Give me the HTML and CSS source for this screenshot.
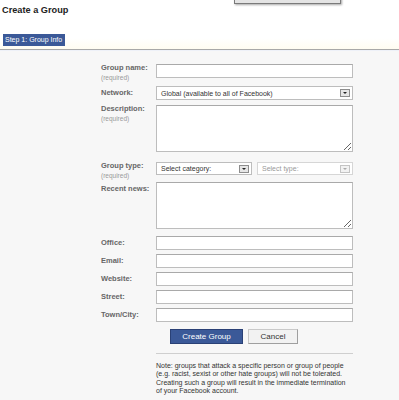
FILE: index.html
```html
<!DOCTYPE html>
<html lang="en">
  <head>
    <meta charset="UTF-8" />
    <title>Create a Group</title>
    <link rel="stylesheet" href="styles.css">
  </head>

  <body>
    <div class="popup-edge"></div>

    <header class="head">
      <h1>Create a Group</h1>
      <div class="tabs">
        <span class="tab">Step 1: Group Info</span>
      </div>
    </header>

    <main class="panel">
      <form class="group-form">
        <div class="row row-req row-name">
          <label class="lbl req-lbl">Group name:<span class="req">(required)</span></label>
          <input class="field" type="text" />
        </div>

        <div class="row row-net">
          <label class="lbl">Network:</label>
          <div class="select">
            <span>Global (available to all of Facebook)</span>
            <span class="arrow"></span>
          </div>
        </div>

        <div class="row row-desc">
          <label class="lbl req-lbl">Description:<span class="req">(required)</span></label>
          <textarea class="area"></textarea>
        </div>

        <div class="row row-type">
          <label class="lbl req-lbl">Group type:<span class="req">(required)</span></label>
          <div class="pair">
            <div class="select">
              <span>Select category:</span>
              <span class="arrow"></span>
            </div>
            <div class="select off">
              <span>Select type:</span>
              <span class="arrow"></span>
            </div>
          </div>
        </div>

        <div class="row row-news">
          <label class="lbl">Recent news:</label>
          <textarea class="area"></textarea>
        </div>

        <div class="row">
          <label class="lbl">Office:</label>
          <input class="field" type="text" />
        </div>
        <div class="row">
          <label class="lbl">Email:</label>
          <input class="field" type="text" />
        </div>
        <div class="row">
          <label class="lbl">Website:</label>
          <input class="field" type="text" />
        </div>
        <div class="row">
          <label class="lbl">Street:</label>
          <input class="field" type="text" />
        </div>
        <div class="row">
          <label class="lbl">Town/City:</label>
          <input class="field" type="text" />
        </div>

        <div class="buttons">
          <button type="button" class="btn btn-main">Create Group</button>
          <button type="button" class="btn btn-cancel">Cancel</button>
        </div>

        <p class="note">
          Note: groups that attack a specific person or group of people<br />
          (e.g. racist, sexist or other hate groups) will not be tolerated.<br />
          Creating such a group will result in the immediate termination<br />
          of your Facebook account.
        </p>
      </form>
    </main>
  </body>
</html>
```

FILE: styles.css
```css
* {
  margin: 0;
  padding: 0;
  box-sizing: border-box;
}

body {
  position: relative;
  height: 400px;
  overflow: hidden;
  font-family: "Liberation Sans", Arial, sans-serif;
  background-color: #f7f7f7;
  color: #333;
}

/* bottom of a menu hanging in from above */
.popup-edge {
  position: absolute;
  top: -20px;
  left: 234px;
  width: 107px;
  height: 24px;
  background: #e4e4e4;
  border: 1px solid #7a7a7a;
  box-shadow: 1px 1px 2px rgba(0, 0, 0, 0.35);
}

.head {
  height: 50px;
  background: linear-gradient(to bottom, #fff 0%, #fff 78%, #fffcf1 100%);
  border-bottom: 1px solid #a8a8a8;
  padding: 5px 0 0 2px;
}

.head h1 {
  font-size: 9.2px;
  line-height: 11px;
  font-weight: bold;
  color: #222;
}

.tabs {
  margin-top: 12px;
  padding-left: 1px;
}

.tab {
  display: inline-block;
  height: 12px;
  padding: 0 3px 0 2px;
  background-color: #3b5998;
  color: #fff;
  font-size: 7px;
  line-height: 12px;
}

.panel {
  border-top: 1px solid #eef1f8;
  padding-top: 13px;
}

.group-form {
  width: 252px;
  margin-left: 101px;
}

.row {
  display: grid;
  grid-template-columns: 55px 197px;
  align-items: start;
  margin-bottom: 4px;
}

.lbl {
  display: flex;
  flex-direction: column;
  padding-top: 2px;
  font-size: 7.5px;
  line-height: 9px;
  font-weight: bold;
  color: #666;
}

.req-lbl {
  padding-top: 0;
  margin-top: -1px;
  line-height: 10px;
}

.req {
  font-size: 6.5px;
  font-weight: normal;
  color: #999;
}

.row-name {
  margin-bottom: 3px;
}

.row-net {
  margin-bottom: 5px;
}

.row-desc {
  margin-bottom: 10px;
}

.row-type {
  margin-bottom: 1px;
}

.row-news {
  margin-bottom: 7px;
}

.field {
  display: block;
  width: 197px;
  height: 14px;
  background: #fff;
  border: 1px solid #bdbdbd;
  border-top-color: #a9a9a9;
}

.area {
  display: block;
  width: 197px;
  height: 47px;
  background: #fff;
  border: 1px solid #bdbdbd;
  border-top-color: #a9a9a9;
  resize: both;
}

.select {
  display: flex;
  align-items: center;
  justify-content: space-between;
  height: 14px;
  padding: 0 2px 0 4px;
  background: #fff;
  border: 1px solid #bdbdbd;
  font-size: 7px;
  color: #333;
}

.arrow {
  position: relative;
  width: 10px;
  height: 8px;
  background: #e6e6e6;
  border: 1px solid #8d8d8d;
}

.arrow::after {
  content: "";
  position: absolute;
  left: 2px;
  top: 2px;
  border-left: 2px solid transparent;
  border-right: 2px solid transparent;
  border-top: 2px solid #222;
}

.pair {
  display: grid;
  grid-template-columns: 96px 96px;
  gap: 5px;
}

.row-type .select {
  height: 13px;
}

.select.off {
  border-color: #d6d6d6;
  color: #9a9a9a;
}

.select.off .arrow {
  background: #f2f2f2;
  border-color: #c4c4c4;
}

.select.off .arrow::after {
  border-top-color: #aaa;
}

.buttons {
  display: flex;
  gap: 5px;
  margin: 7px 0 0 69px;
}

.btn {
  height: 15px;
  font-family: "Liberation Sans", Arial, sans-serif;
  font-size: 8px;
  cursor: pointer;
}

.btn-main {
  width: 73px;
  background-color: #3b5998;
  border: 1px solid #2a4176;
  color: #fff;
}

.btn-cancel {
  width: 50px;
  background-color: #f2f2f2;
  border: 1px solid #c9c9c9;
  border-right-color: #9f9f9f;
  border-bottom-color: #9f9f9f;
  color: #333;
}

.note {
  margin: 9px 0 0 55px;
  padding-top: 8px;
  border-top: 1px solid #cfcfcf;
  font-size: 7px;
  line-height: 8.3px;
  color: #333;
  white-space: nowrap;
}
```
